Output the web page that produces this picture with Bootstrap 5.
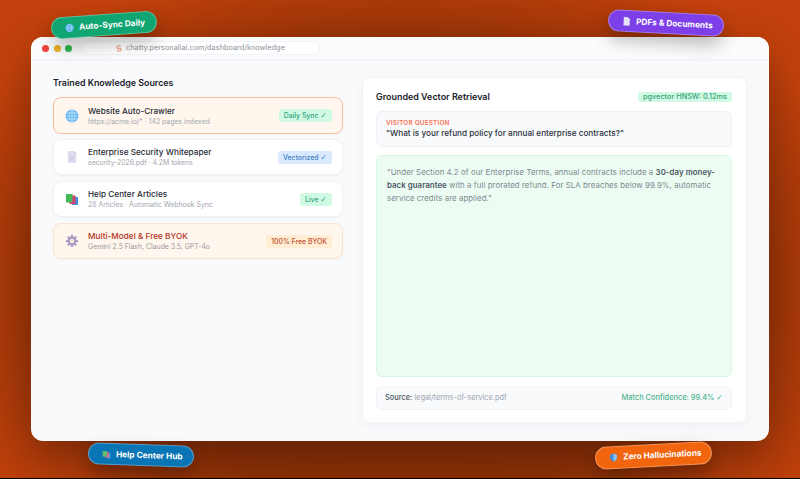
<!DOCTYPE html>
<html lang="en">
<head>
<meta charset="utf-8">
<title>Chatty knowledge</title>
<link href="https://cdn.jsdelivr.net/npm/bootstrap@5.3.0/dist/css/bootstrap.min.css" rel="stylesheet">
<style>
html,body{height:479px;overflow:hidden;background:#000;}
body{font-family:"Inter","Liberation Sans",sans-serif;color:#1f2430;}
.stage{height:478px;padding:37px 31px;position:relative;overflow:hidden;
 background:radial-gradient(ellipse 62% 72% at 50% 60%,#7a2905 0%,#8a2f06 62%,#c2410c 100%);}
.appwin{height:404px;background:#f8fafc;border-radius:12px;box-shadow:0 12px 40px rgba(0,0,0,.28);overflow:hidden;}
.winbar{height:23px;padding:0 10px 0 11px;gap:4.5px;background:#fbfcfd;border-bottom:1px solid #f0f2f5;}
.dot{width:7px;height:7px;border-radius:50%;}
.urlbar{width:238px;height:14px;margin-left:5px;background:#fff;border:1px solid #f1f3f6;border-radius:4px;font-size:7.3px;color:#8a919c;letter-spacing:.03px;}
.winbody{padding:17px 22px 18px;gap:19px;height:381px;}
.leftcol{width:290px;flex:none;}
.lefttitle{font-size:8.9px;font-weight:600;margin:0 0 8px;line-height:12px;color:#1d222c;}
.srccard{height:36px;padding:0 10px 0 11px;margin-bottom:6px;background:#fff;border:1px solid #f0f2f6;border-radius:8px;box-shadow:0 1px 3px rgba(15,23,42,.04);}
.srccard.hot{height:37px;background:#fff6ed;border-color:#fdba9f;margin-bottom:5px;}
.srccard.warm{background:#fff6ed;border-color:#fde3cf;}
.srcicon{width:14px;height:14px;margin-right:9px;flex:none;}
.srcname{font-size:8.2px;font-weight:500;line-height:11px;color:#262b36;letter-spacing:.02px;}
.srcsub{font-size:6.9px;line-height:9px;color:#a1a6b0;}
.warm .srcname{color:#b4341c;}
.warm .srcsub{color:#9a9aa2;}
.tagpill{font-size:6.9px;font-weight:500;line-height:13px;padding:0 5px;border-radius:3px;white-space:nowrap;}
.tag-green{background:#d1fae5;color:#34a47a;}
.tag-blue{background:#dbeafe;color:#3b7fc4;}
.tag-orange{background:#ffedd5;color:#c2502a;}
.tick{font-family:"DejaVu Sans",sans-serif;font-size:8px;font-weight:400;line-height:1;}
.rightpanel{flex:1;background:#fff;border:1px solid #f1f3f6;border-radius:8px;padding:13px 14px 12px 13px;box-shadow:0 4px 14px rgba(15,23,42,.04);}
.paneltitle{font-size:8.95px;font-weight:600;line-height:12px;color:#1d222c;}
.speedtag{font-size:7.3px;font-weight:500;line-height:10px;padding:0 5px;background:#d1fae5;color:#34a47a;border-radius:3px;}
.askbox{height:36px;flex:none;margin-top:8px;padding:7px 9px;background:#f8fafc;border:1px solid #f0f2f6;border-radius:6px;}
.asklabel{font-size:6.4px;font-weight:600;line-height:8px;color:#f97355;letter-spacing:.2px;}
.askq{font-size:8.2px;font-weight:500;line-height:12px;color:#2b303a;}
.answerbox{flex:1;margin-top:8px;padding:10px;background:#edfcf3;border:1px solid #d6f8e3;border-radius:6px;font-size:7.8px;line-height:13.2px;color:#7d8890;letter-spacing:.08px;}
.answerbox b{font-weight:600;color:#4b5563;}
.sourcebox{height:24px;flex:none;margin-top:9px;padding:0 8px;background:#f8fafc;border:1px solid #f0f2f6;border-radius:6px;font-size:7.4px;color:#9ca3af;}
.sourcebox span.lbl{color:#4b5563;font-weight:500;}
.conf{color:#4fb58c;font-weight:500;}
.floatpill{position:absolute;height:22px;padding:0 13px;border-radius:12px;color:#fff;font-size:8.3px;font-weight:700;gap:5px;white-space:nowrap;border:1px solid rgba(255,255,255,.3);box-shadow:0 8px 18px rgba(0,0,0,.28);}
.fp-sync{left:51px;top:14px;width:106px;background:#10a571;transform:rotate(-4deg);}
.fp-pdf{left:608px;top:12px;width:116px;background:#7c3fe8;transform:rotate(3deg);}
.fp-help{left:88px;top:444px;width:106px;background:#0a75b5;transform:rotate(2deg);}
.fp-zero{left:595px;top:444px;width:117px;height:23px;background:#f2650f;transform:rotate(-3deg);}
.floatpill svg{width:9px;height:9px;flex:none;}
</style>
</head>
<body>
<div class="stage">
 <div class="appwin d-flex flex-column">
  <div class="winbar d-flex align-items-center">
   <span class="dot" style="background:#f0453f"></span>
   <span class="dot" style="background:#eeb02b"></span>
   <span class="dot" style="background:#2ebb4e"></span>
   <div class="urlbar d-flex align-items-center justify-content-center gap-1">
    <svg width="6" height="7" viewBox="0 0 6 7"><path d="M5 1.2H2a1 1 0 0 0 0 2.3h2a1 1 0 0 1 0 2.3H1" fill="none" stroke="#f2a98c" stroke-width="1.3"/></svg>
    <span>chatty.personaliai.com/dashboard/knowledge</span>
   </div>
  </div>
  <div class="winbody d-flex">
   <div class="leftcol">
    <div class="lefttitle">Trained Knowledge Sources</div>
    <div class="srccard hot d-flex align-items-center">
     <svg class="srcicon" viewBox="0 0 14 14"><circle cx="7" cy="7" r="6.4" fill="#5db4ee"/><g fill="none" stroke="#d6ecfb" stroke-width=".7"><ellipse cx="7" cy="7" rx="2.9" ry="6.2"/><path d="M7 .8v12.4M.8 7h12.4M1.7 4h10.6M1.7 10h10.6"/></g></svg>
     <div class="flex-grow-1"><div class="srcname">Website Auto-Crawler</div><div class="srcsub">https://acme.io/* · 142 pages indexed</div></div>
     <span class="tagpill tag-green">Daily Sync <span class="tick">✓</span></span>
    </div>
    <div class="srccard d-flex align-items-center">
     <svg class="srcicon" viewBox="0 0 14 14"><path d="M2.8 1h6l2.6 2.6V13H2.800z" fill="#e0dcf0"/><path d="M8.800 1v2.600h2.600z" fill="#c9c4e2"/><path d="M4.500 6.500h5M4.500 8.300h5M4.500 10h3.500" stroke="#c3bede" stroke-width=".7"/></svg>
     <div class="flex-grow-1"><div class="srcname">Enterprise Security Whitepaper</div><div class="srcsub">security-2026.pdf · 4.2M tokens</div></div>
     <span class="tagpill tag-blue">Vectorized <span class="tick">✓</span></span>
    </div>
    <div class="srccard d-flex align-items-center">
     <svg class="srcicon" viewBox="0 0 14 14"><rect x="7" y="5" width="6" height="8" fill="#3f8fe0"/><rect x="4.500" y="3.500" width="6" height="8.500" fill="#d9406e"/><rect x="1" y="2" width="6.500" height="8.500" fill="#45b85a"/></svg>
     <div class="flex-grow-1"><div class="srcname">Help Center Articles</div><div class="srcsub">28 Articles · Automatic Webhook Sync</div></div>
     <span class="tagpill tag-green">Live <span class="tick">✓</span></span>
    </div>
    <div class="srccard warm d-flex align-items-center">
     <svg class="srcicon" viewBox="0 0 14 14"><g fill="#a99ccb"><circle cx="7" cy="7" r="4.600"/><g stroke="#a99ccb" stroke-width="2.200"><path d="M7 1v12M1 7h12M2.800 2.800l8.400 8.400M11.200 2.800l-8.400 8.400"/></g></g><circle cx="7" cy="7" r="2.200" fill="#f3ead9"/></svg>
     <div class="flex-grow-1"><div class="srcname">Multi-Model &amp; Free BYOK</div><div class="srcsub">Gemini 2.5 Flash, Claude 3.5, GPT-4o</div></div>
     <span class="tagpill tag-orange">100% Free BYOK</span>
    </div>
   </div>
   <div class="rightpanel d-flex flex-column">
    <div class="d-flex align-items-center justify-content-between">
     <span class="paneltitle">Grounded Vector Retrieval</span>
     <span class="speedtag">pgvector HNSW: 0.12ms</span>
    </div>
    <div class="askbox">
     <div class="asklabel">VISITOR QUESTION</div>
     <div class="askq">"What is your refund policy for annual enterprise contracts?"</div>
    </div>
    <div class="answerbox">"Under Section 4.2 of our Enterprise Terms, annual contracts include a <b>30-day money-back guarantee</b> with a full prorated refund. For SLA breaches below 99.9%, automatic service credits are applied."</div>
    <div class="sourcebox d-flex align-items-center justify-content-between">
     <span><span class="lbl">Source:</span> legal/terms-of-service.pdf</span>
     <span class="conf">Match Confidence: 99.4% <span class="tick">✓</span></span>
    </div>
   </div>
  </div>
 </div>
 <div class="floatpill fp-sync d-flex align-items-center">
  <svg viewBox="0 0 14 14"><circle cx="7" cy="7" r="6.400" fill="#5db4ee"/><g fill="none" stroke="#c8e6fa" stroke-width=".8"><ellipse cx="7" cy="7" rx="3" ry="6.200"/><path d="M.8 7h12.400"/></g></svg><span>Auto-Sync Daily</span>
 </div>
 <div class="floatpill fp-pdf d-flex align-items-center">
  <svg viewBox="0 0 14 14"><path d="M2.500 .5h6.500l3 3V13.500H2.500z" fill="#e6e0f7"/></svg><span>PDFs &amp; Documents</span>
 </div>
 <div class="floatpill fp-help d-flex align-items-center">
  <svg viewBox="0 0 14 14"><rect x="7" y="5" width="6" height="8" fill="#5a9fe0"/><rect x="4.500" y="3.500" width="6" height="8.500" fill="#d9607e"/><rect x="1" y="2" width="6.500" height="8.500" fill="#5fc06a"/></svg><span>Help Center Hub</span>
 </div>
 <div class="floatpill fp-zero d-flex align-items-center">
  <svg viewBox="0 0 14 14"><path d="M7 .8l5.200 1.900v4.100c0 3-2.200 5.200-5.200 6.400-3-1.200-5.200-3.400-5.200-6.400V2.700z" fill="#3f8fe0"/><path d="M7 .8l5.200 1.900v4.100c0 3-2.200 5.200-5.200 6.400z" fill="#8cc3f2"/></svg><span>Zero Hallucinations</span>
 </div>
</div>
<script src="https://cdn.jsdelivr.net/npm/bootstrap@5.3.0/dist/js/bootstrap.bundle.min.js"></script>
</body>
</html>
